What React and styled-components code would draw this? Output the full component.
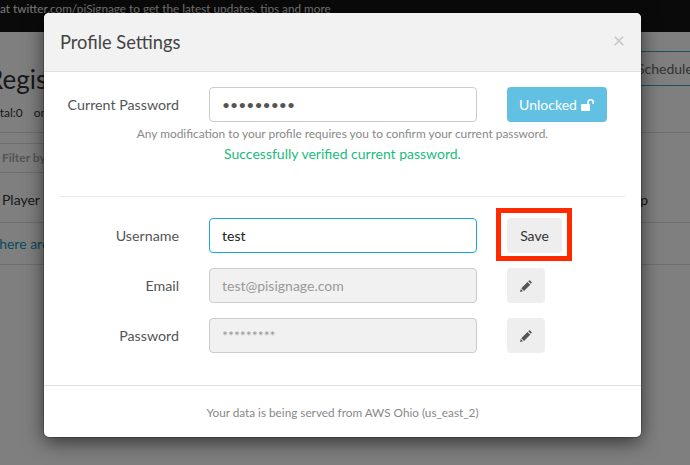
import React from "react";
import styled, { createGlobalStyle } from "styled-components";

const GlobalStyle = createGlobalStyle`
  html, body {
    margin: 0;
    height: 100%;
    overflow: hidden;
    background: #fff;
    font-family: Lato, "Open Sans", sans-serif;
    color: #333;
  }
`;

const Page = styled.div`
  position: relative;
  width: 690px;
  height: 465px;
  overflow: hidden;
`;
const TopBar = styled.div`
  height: 32px;
  background: #141414;
  color: #eee;
  font-size: 11.75px;
  line-height: 18px;
  white-space: nowrap;
  overflow: hidden;
`;
const HeadRow = styled.div`
  display: flex;
  justify-content: space-between;
  height: 100px;
  border-bottom: 1px solid #ddd;
`;
const Title = styled.h1`
  margin: 31px 0 0 -13px;
  font-size: 26px;
  font-weight: 400;
  line-height: 32px;
  color: #333;
  white-space: nowrap;
`;
const Totals = styled.div`
  display: flex;
  gap: 11px;
  margin: 9px 0 0 -7px;
  font-size: 12px;
  line-height: 18px;
`;
const ScheduleTab = styled.div`
  align-self: flex-start;
  margin-top: 19px;
  width: 53px;
  height: 33px;
  border: solid #3aa3c0;
  border-width: 1px 0;
  font-size: 14px;
  line-height: 33px;
  color: #666;
  white-space: nowrap;
`;
const FilterBlock = styled.div`
  width: 200px;
  margin-top: 10px;
  padding: 0 2px;
  height: 28px;
  border: solid #ddd;
  border-width: 1px 0;
  font-size: 12px;
  font-weight: 700;
  line-height: 28px;
  color: #aaa;
`;
const TableHead = styled.div`
  display: flex;
  justify-content: space-between;
  height: 49px;
  border-bottom: 1px solid #ddd;
  padding: 0 42px 0 2px;
  font-size: 14px;
  line-height: 53px;
`;
const EmptyRow = styled.div`
  height: 41px;
  border-bottom: 1px solid #ddd;
  font-size: 14px;
  line-height: 41px;
  color: #1295c0;
  text-indent: -9px;
`;
const Backdrop = styled.div`
  position: absolute;
  inset: 0;
  background: rgba(0, 0, 0, 0.5);
`;
const Modal = styled.div`
  position: absolute;
  left: 44px;
  top: 13px;
  width: 597px;
  height: 424px;
  box-sizing: border-box;
  display: flex;
  flex-direction: column;
  background: #fff;
  border-radius: 5px;
  box-shadow: 0 0 0 1px rgba(0, 0, 0, 0.2), 0 5px 20px rgba(0, 0, 0, 0.6);
  overflow: hidden;
`;
const ModalHeader = styled.div`
  display: flex;
  justify-content: space-between;
  align-items: center;
  height: 58px;
  padding: 0 16px;
  background: #f2f2f2;
  border-bottom: 1px solid #e0e0e0;
`;
const ModalTitle = styled.h4`
  margin: 0;
  font-size: 18.3px;
  font-weight: 400;
  color: #444;
`;
const Close = styled.span`
  margin: 0 0 6px;
  color: #c8c8c8;
  font-size: 21px;
  line-height: 21px;
`;
const ModalBody = styled.div`
  flex: 1;
  padding: 15px 16px 0;
`;
const FormRow = styled.div`
  display: flex;
  align-items: center;
  height: 35px;
  margin-bottom: 15px;
`;
const Label = styled.label`
  width: 119px;
  margin-right: 30px;
  text-align: right;
  font-size: 14.25px;
  color: #555;
  white-space: nowrap;
`;
const Field = styled.input`
  width: 268px;
  height: 35px;
  box-sizing: border-box;
  padding: 0 12px;
  border: 1px solid ${(props) => (props.$focused ? "#1aa5dc" : "#ccc")};
  border-radius: 4px;
  outline: none;
  background: ${(props) => (props.disabled ? "#f1f1f1" : "#fff")};
  font-family: inherit;
  font-size: 14px;
  color: ${(props) => (props.$focused ? "#222" : "#555")};
  &::placeholder {
    color: #999;
    opacity: 1;
  }
`;
const ActionCell = styled.div`
  position: relative;
  display: flex;
  margin-left: 30px;
`;
const Button = styled.button`
  display: flex;
  align-items: center;
  justify-content: center;
  gap: 4px;
  width: ${(props) => props.$width}px;
  height: 35px;
  padding: 0;
  border: 0;
  border-radius: 4px;
  background: ${(props) => (props.$info ? "#62c0e2" : "#eee")};
  color: ${(props) => (props.$info ? "#fff" : "#333")};
  font-family: inherit;
  font-size: 14px;
`;
const Highlight = styled.div`
  position: absolute;
  left: -11px;
  top: -10px;
  width: 76px;
  height: 53px;
  box-sizing: border-box;
  border: 5.5px solid #ff2a00;
  pointer-events: none;
`;
const Hint = styled.p`
  margin: -12px 0 0;
  text-align: center;
  font-size: 11.9px;
  line-height: 18px;
  color: #888;
`;
const Success = styled.p`
  margin: 1px 0 0;
  text-align: center;
  font-size: 14px;
  line-height: 20px;
  color: #1abc7c;
`;
const Divider = styled.hr`
  margin: 32px 0 21px;
  border: 0;
  border-top: 1px solid #e8e8e8;
`;
const ModalFooter = styled.div`
  height: 51px;
  border-top: 1px solid #e0e0e0;
  text-align: center;
  font-size: 11.75px;
  line-height: 54px;
  color: #888;
`;

const UnlockIcon = () => (
  <svg width="14" height="12" viewBox="0 0 14 12" aria-hidden="true">
    <rect x="0" y="5" width="9" height="7" rx="1" fill="#fff" />
    <path d="M7 6V3.4a2.6 2.6 0 0 1 5.2 0V5" fill="none" stroke="#fff" strokeWidth="1.6" />
  </svg>
);

const PencilIcon = () => (
  <svg width="12" height="12" viewBox="0 0 24 24" fill="#555" aria-hidden="true">
    <path d="M16.5 2.5l1.6-1.6q1-1 2 0l3 3q1 1 0 2l-1.6 1.6z" />
    <path d="M15 4l5.5 5.5L8 22l-5.5-5.5z" />
    <path d="M1.5 18l4.5 4.5-6 1.5z" />
  </svg>
);

const fields = [
  { label: "Email", placeholder: "test@pisignage.com" },
  { label: "Password", placeholder: "*********" },
];

export default function App() {
  return (
    <Page>
      <GlobalStyle />
      <TopBar>at twitter.com/piSignage to get the latest updates, tips and more</TopBar>
      <HeadRow>
        <div>
          <Title>Registered Players</Title>
          <Totals>
            <span>otal:0</span>
            <span>on</span>
          </Totals>
        </div>
        <ScheduleTab>Schedule</ScheduleTab>
      </HeadRow>
      <FilterBlock>Filter by</FilterBlock>
      <TableHead>
        <span>Player</span>
        <span>p</span>
      </TableHead>
      <EmptyRow>There are no players</EmptyRow>
      <Backdrop />
      <Modal>
        <ModalHeader>
          <ModalTitle>Profile Settings</ModalTitle>
          <Close>×</Close>
        </ModalHeader>
        <ModalBody>
          <FormRow>
            <Label>Current Password</Label>
            <Field type="password" value="123456789" readOnly />
            <ActionCell>
              <Button $info $width={100}>
                Unlocked <UnlockIcon />
              </Button>
            </ActionCell>
          </FormRow>
          <Hint>Any modification to your profile requires you to confirm your current password.</Hint>
          <Success>Successfully verified current password.</Success>
          <Divider />
          <FormRow>
            <Label>Username</Label>
            <Field $focused value="test" readOnly />
            <ActionCell>
              <Button $width={55}>Save</Button>
              <Highlight />
            </ActionCell>
          </FormRow>
          {fields.map((field) => (
            <FormRow key={field.label}>
              <Label>{field.label}</Label>
              <Field disabled placeholder={field.placeholder} />
              <ActionCell>
                <Button $width={38} aria-label="Edit">
                  <PencilIcon />
                </Button>
              </ActionCell>
            </FormRow>
          ))}
        </ModalBody>
        <ModalFooter>Your data is being served from AWS Ohio (us_east_2)</ModalFooter>
      </Modal>
    </Page>
  );
}
